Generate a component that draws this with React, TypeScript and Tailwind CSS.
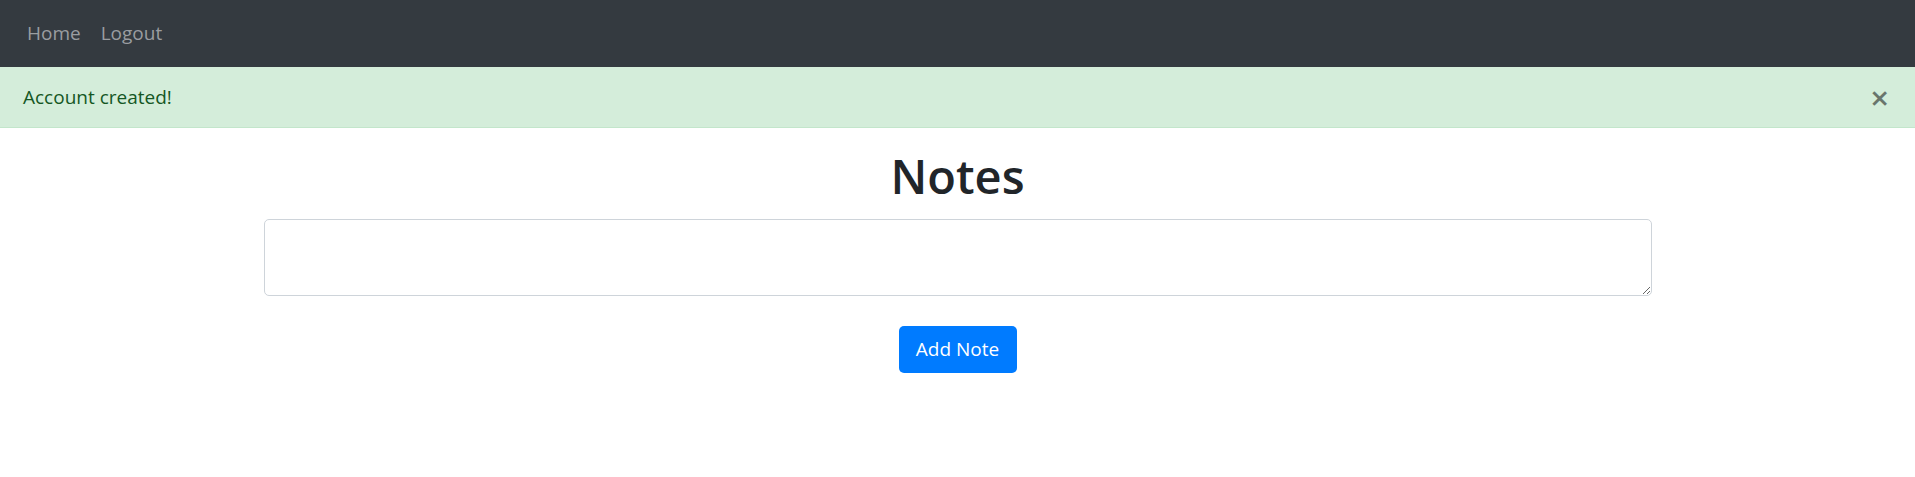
export default function App() {
  return (
    <div className="min-h-screen bg-white font-['Open_Sans',sans-serif] text-[#212529]">
      <nav className="flex h-[67px] items-center bg-[#343a40] px-[17px]">
        <a href="#" className="px-[10px] text-[19px] text-[#9a9da0]">
          Home
        </a>
        <a href="#" className="px-[10px] text-[19px] text-[#9a9da0]">
          Logout
        </a>
      </nav>

      <div className="flex h-[61px] items-center justify-between border-b border-[#c3e6cb] bg-[#d4edda] pl-[23px] pr-[26px] text-[19px] text-[#155724]">
        <span>Account created!</span>
        <button
          type="button"
          aria-label="Close"
          className="text-[33px] font-semibold leading-none text-black opacity-50"
        >
          ×
        </button>
      </div>

      <main className="flex flex-col items-center">
        <h1 className="mt-[20px] text-[47px] font-semibold leading-[57px]">Notes</h1>
        <textarea
          name="note"
          className="mt-[14px] h-[77px] w-[1388px] rounded-[5px] border border-[#ced4da] px-[14px] py-[7px] text-[19px] outline-none"
        />
        <button
          type="submit"
          className="mt-[30px] h-[47px] w-[118px] rounded-[5px] bg-[#007bff] text-[19px] text-white"
        >
          Add Note
        </button>
      </main>
    </div>
  );
}
